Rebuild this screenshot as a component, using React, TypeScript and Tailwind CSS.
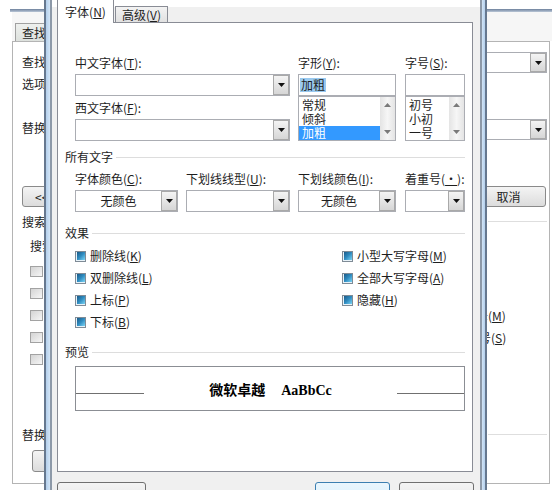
import React from 'react'

function Arrow() {
  return (
    <div className="flex w-[16px] shrink-0 items-center justify-center border border-[#a9a9a9] bg-gradient-to-b from-[#f4f4f4] to-[#d6d6d6]">
      <svg width="7" height="4" viewBox="0 0 7 4">
        <path d="M0 0H7L3.5 4Z" fill="#111" />
      </svg>
    </div>
  )
}

function Combo({ text, w }: { text?: string; w: string }) {
  return (
    <div className={`flex h-[22px] border border-[#abadb3] bg-white ${w}`}>
      <div className="flex flex-1 items-center justify-center">{text}</div>
      <Arrow />
    </div>
  )
}

function ScrollList({ items, sel }: { items: string[]; sel?: number }) {
  return (
    <div className="flex h-[45px] border border-[#abadb3] bg-white">
      <div className="flex-1 pt-px">
        {items.map((t, i) => (
          <div
            key={t}
            className={
              i === sel
                ? 'flex h-[14px] items-center bg-[#3399ff] pl-[3px] text-[12px] leading-[12px] text-white'
                : 'flex h-[14px] items-center pl-[3px] text-[12px] leading-[12px]'
            }
          >
            {t}
          </div>
        ))}
      </div>
      <div className="flex w-[15px] flex-col items-center justify-between bg-gradient-to-r from-[#e4e4e4] via-[#f6f6f6] to-[#e4e4e4] py-[6px]">
        <svg width="7" height="4" viewBox="0 0 7 4">
          <path d="M0 4H7L3.5 0Z" fill="#7a7a7a" />
        </svg>
        <svg width="7" height="4" viewBox="0 0 7 4">
          <path d="M0 0H7L3.5 4Z" fill="#7a7a7a" />
        </svg>
      </div>
    </div>
  )
}

function Group({ title }: { title: string }) {
  return (
    <div className="flex h-[16px] items-center">
      <span>{title}</span>
      <div className="ml-[3px] h-px flex-1 bg-[#dddddd]" />
    </div>
  )
}

function BlueCheck({ children }: { children: React.ReactNode }) {
  return (
    <div className="flex h-[22px] items-center">
      <span className="flex h-[11px] w-[11px] items-center justify-center border border-[#7f8b96] bg-[#e8f2f8]">
        <span className="h-[8px] w-[8px] bg-gradient-to-br from-[#1b5a88] via-[#2f8cc0] to-[#7ad6f6]" />
      </span>
      <span className="ml-[4px]">{children}</span>
    </div>
  )
}

function GrayCheck() {
  return <div className="ml-[8px] h-[11px] w-[13px] border border-[#a2a2a2] bg-gradient-to-br from-[#d4d4d4] to-[#f6f6f6]" />
}

// 뒤쪽 찾기/바꾸기 창 (대부분 가려짐)
function FindWindow() {
  return (
    <div className="flex h-full flex-col">
      <div className="h-[9px] shrink-0" />
      <div className="ml-[10px] h-[3px] shrink-0 bg-gradient-to-b from-[#6e819c] to-[#bac7d7]" />
      <div className="ml-[12px] flex h-[29px] shrink-0 items-end bg-[#f6f6f6] pl-[3px]">
        <div className="flex h-[18px] w-[40px] items-center border border-b-0 border-[#a0a0a0] bg-gradient-to-b from-[#eef0ee] to-[#dde1dd] pl-[6px]">
          查找
        </div>
      </div>
      <div className="ml-[12px] mr-[2px] flex h-[443px] shrink-0 justify-between border border-[#b4b4b4] bg-white">
        <div className="flex flex-col pl-[9px]">
          <div className="mt-[12px]">查找</div>
          <div className="mt-[6px]">选项</div>
          <div className="mt-[28px]">替换</div>
          <div className="mt-[50px] flex h-[21px] w-[90px] items-center rounded-[3px] border border-[#8a8a8a] bg-gradient-to-b from-[#f4f4f4] to-[#dcdcdc] pl-[12px]">
            &lt;&lt; 更少(L)
          </div>
          <div className="mt-[7px]">搜索</div>
          <div className="ml-[8px] mt-[8px]">搜索</div>
          <div className="mt-[12px] flex flex-col gap-[11px]">
            <GrayCheck />
            <GrayCheck />
            <GrayCheck />
            <GrayCheck />
            <GrayCheck />
          </div>
          <div className="mt-[62px]">替换</div>
          <div className="ml-[10px] mt-[7px] flex h-[22px] w-[75px] items-center justify-center rounded-[3px] border border-[#8a8a8a] bg-gradient-to-b from-[#f4f4f4] to-[#dcdcdc]">
            格式(O)
          </div>
        </div>
        <div className="flex w-[61px] flex-col">
          <div className="-ml-[20px] mt-[10px] flex h-[21px] w-[79px] border border-[#abadb3] bg-white">
            <div className="flex-1" />
            <Arrow />
          </div>
          <div className="-ml-[20px] mt-[46px] flex h-[21px] w-[79px] border border-[#abadb3] bg-white">
            <div className="flex-1" />
            <Arrow />
          </div>
          <div className="-ml-[17px] mt-[46px] flex h-[21px] w-[75px] items-center justify-center rounded-[3px] border border-[#8a8a8a] bg-gradient-to-b from-[#f4f4f4] to-[#dcdcdc]">
            取消
          </div>
          <div className="mr-[2px] mt-[14px] h-px bg-[#dedede]" />
          <div className="-ml-[24px] mt-[86px] whitespace-nowrap">
            字母(<u>M</u>)
          </div>
          <div className="-ml-[21px] mt-[6px] whitespace-nowrap">
            符号(<u>S</u>)
          </div>
          <div className="mr-[2px] mt-[88px] h-px bg-[#dedede]" />
        </div>
      </div>
    </div>
  )
}

function FontDialog() {
  return (
    <div className="absolute left-[44px] top-0 flex h-[490px] w-[443px]">
      <div className="w-[8px] shrink-0 border-l-2 border-r-2 border-l-[#66788f] border-r-[#8d99a8] bg-gradient-to-r from-[#b3cfec] to-[#d3e5f6]" />
      <div className="flex flex-1 flex-col bg-[#f0f0f0]">
        <div className="flex h-[22px] shrink-0 items-end bg-[linear-gradient(#ffffff_7px,#f0f0f0_7px)] pl-[5px]">
          <div className="relative z-10 -mb-px flex h-[23px] w-[57px] items-center justify-center border border-b-0 border-t-0 border-[#898c95] bg-white">
            字体(<u>N</u>)
          </div>
          <div className="ml-[1px] flex h-[16px] w-[53px] items-center justify-center border border-b-0 border-[#898c95] bg-gradient-to-b from-[#f3f3f3] to-[#e1e1e1]">
            高级(<u>V</u>)
          </div>
        </div>
        <div className="ml-[5px] flex h-[450px] w-[416px] shrink-0 flex-col border border-[#898c95] bg-white pl-[7px] pr-[7px] pt-[32px]">
          <div className="flex gap-[8px] pl-[10px]">
            <div className="flex w-[215px] flex-col">
              <div>中文字体(<u>T</u>):</div>
              <div className="mt-[3px] flex h-[22px] border border-[#abadb3] bg-white">
                <div className="flex-1" />
                <Arrow />
              </div>
              <div className="mt-[4px]">西文字体(<u>F</u>):</div>
              <div className="mt-[3px] flex h-[22px] border border-[#abadb3] bg-white">
                <div className="flex-1" />
                <Arrow />
              </div>
            </div>
            <div className="flex w-[98px] flex-col">
              <div>字形(<u>Y</u>):</div>
              <div className="mt-[3px] flex h-[22px] items-center border border-[#abadb3] bg-white pl-px">
                <span className="bg-[#99c9ef] px-px leading-[14px]">加粗</span>
              </div>
              <ScrollList items={['常规', '倾斜', '加粗']} sel={2} />
            </div>
            <div className="ml-px flex w-[60px] flex-col">
              <div>字号(<u>S</u>):</div>
              <div className="mt-[3px] h-[22px] border border-[#abadb3] bg-white" />
              <ScrollList items={['初号', '小初', '一号']} />
            </div>
          </div>

          <div className="mt-[8px]">
            <Group title="所有文字" />
          </div>
          <div className="mt-[6px] flex gap-[8px] pl-[10px]">
            <div className="w-[103px]">字体颜色(<u>C</u>):</div>
            <div className="w-[104px]">下划线线型(<u>U</u>):</div>
            <div className="w-[98px]">下划线颜色(<u>I</u>):</div>
            <div className="ml-px w-[60px]">着重号(<u>·</u>):</div>
          </div>
          <div className="mt-[3px] flex gap-[8px] pl-[10px]">
            <Combo w="w-[103px]" text="无颜色" />
            <Combo w="w-[104px]" />
            <Combo w="w-[98px]" text="无颜色" />
            <div className="ml-px">
              <Combo w="w-[60px]" />
            </div>
          </div>

          <div className="mt-[13px]">
            <Group title="效果" />
          </div>
          <div className="mt-[4px] flex pl-[10px]">
            <div className="flex w-[267px] flex-col">
              <BlueCheck>删除线(<u>K</u>)</BlueCheck>
              <BlueCheck>双删除线(<u>L</u>)</BlueCheck>
              <BlueCheck>上标(<u>P</u>)</BlueCheck>
              <BlueCheck>下标(<u>B</u>)</BlueCheck>
            </div>
            <div className="flex flex-col">
              <BlueCheck>小型大写字母(<u>M</u>)</BlueCheck>
              <BlueCheck>全部大写字母(<u>A</u>)</BlueCheck>
              <BlueCheck>隐藏(<u>H</u>)</BlueCheck>
            </div>
          </div>

          <div className="mt-[11px]">
            <Group title="预览" />
          </div>
          <div className="ml-[10px] mt-[6px] flex h-[45px] items-start border border-[#8b8e94] bg-white">
            <div className="mt-[26px] h-px w-[68px] bg-[#707070]" />
            <div className="mt-[13px] flex-1 whitespace-nowrap text-center leading-[18px] text-black">
              <span className="text-[14px] font-bold">微软卓越</span>
              <span className="ml-[16px] font-['Liberation_Serif',serif] text-[14px] font-bold">AaBbCc</span>
            </div>
            <div className="mt-[26px] h-px w-[67px] bg-[#707070]" />
          </div>
        </div>
        <div className="mt-[10px] flex shrink-0">
          <div className="ml-[5px] h-[22px] w-[89px] rounded-t-[3px] border border-[#707070] bg-gradient-to-b from-[#f4f4f4] to-[#e6e6e6]" />
          <div className="ml-[169px] h-[22px] w-[75px] rounded-t-[3px] border border-[#3c7fb1] bg-gradient-to-b from-[#eaf6fd] to-[#d9f0fc]" />
          <div className="ml-[9px] h-[22px] w-[75px] rounded-t-[3px] border border-[#707070] bg-gradient-to-b from-[#f4f4f4] to-[#e6e6e6]" />
        </div>
      </div>
      <div className="w-[7px] shrink-0 border-l-2 border-r-2 border-l-[#8d99a8] border-r-[#66788f] bg-gradient-to-r from-[#d3e5f6] to-[#b3cfec]" />
    </div>
  )
}

export default function App() {
  return (
    <div className="relative h-[490px] w-[552px] overflow-hidden bg-white font-['Noto_Sans_CJK_SC',sans-serif] text-[12px] leading-[16px] text-[#1e1e1e]">
      <FindWindow />
      <FontDialog />
    </div>
  )
}
